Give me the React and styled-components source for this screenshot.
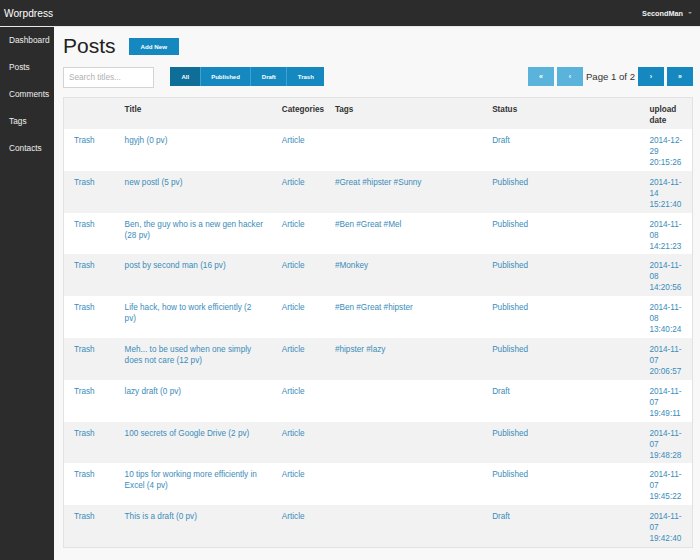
import styled, { createGlobalStyle } from 'styled-components';

const posts = [
    { title: 'hgyjh (0 pv)', category: 'Article', tags: '', status: 'Draft', date: ['2014-12-', '29', '20:15:26'] },
    { title: 'new postl (5 pv)', category: 'Article', tags: '#Great #hipster #Sunny', status: 'Published', date: ['2014-11-', '14', '15:21:40'] },
    { title: 'Ben, the guy who is a new gen hacker (28 pv)', category: 'Article', tags: '#Ben #Great #Mel', status: 'Published', date: ['2014-11-', '08', '14:21:23'] },
    { title: 'post by second man (16 pv)', category: 'Article', tags: '#Monkey', status: 'Published', date: ['2014-11-', '08', '14:20:56'] },
    { title: 'Life hack, how to work efficiently (2 pv)', category: 'Article', tags: '#Ben #Great #hipster', status: 'Published', date: ['2014-11-', '08', '13:40:24'] },
    { title: 'Meh... to be used when one simply does not care (12 pv)', category: 'Article', tags: '#hipster #lazy', status: 'Published', date: ['2014-11-', '07', '20:06:57'] },
    { title: 'lazy draft (0 pv)', category: 'Article', tags: '', status: 'Draft', date: ['2014-11-', '07', '19:49:11'] },
    { title: '100 secrets of Google Drive (2 pv)', category: 'Article', tags: '', status: 'Published', date: ['2014-11-', '07', '19:48:28'] },
    { title: '10 tips for working more efficiently in Excel (4 pv)', category: 'Article', tags: '', status: 'Published', date: ['2014-11-', '07', '19:45:22'] },
    { title: 'This is a draft (0 pv)', category: 'Article', tags: '', status: 'Draft', date: ['2014-11-', '07', '19:42:40'] },
];

const menu = ['Dashboard', 'Posts', 'Comments', 'Tags', 'Contacts'];

export default function App() {
    return (
        <>
            <GlobalStyle />
            <TopBar>
                <Brand>Worpdress</Brand>
                <User>
                    SecondMan
                    <Caret />
                </User>
            </TopBar>
            <Layout>
                <Sidebar>
                    {menu.map((item) => (
                        <MenuItem key={item}>{item}</MenuItem>
                    ))}
                </Sidebar>
                <Main>
                    <PageHeader>
                        <Title>Posts</Title>
                        <AddButton>Add New</AddButton>
                    </PageHeader>
                    <Toolbar>
                        <Search placeholder='Search titles...' />
                        <Filters>
                            <FilterButton $active>All</FilterButton>
                            <FilterButton>Published</FilterButton>
                            <FilterButton>Draft</FilterButton>
                            <FilterButton>Trash</FilterButton>
                        </Filters>
                        <Pager>
                            <PageButton $disabled>«</PageButton>
                            <PageButton $disabled>‹</PageButton>
                            <PageText>Page 1 of 2</PageText>
                            <PageButton>›</PageButton>
                            <PageButton>»</PageButton>
                        </Pager>
                    </Toolbar>
                    <Table>
                        <colgroup>
                            <col style={{ width: 51 }} />
                            <col style={{ width: 157 }} />
                            <col style={{ width: 53 }} />
                            <col style={{ width: 157 }} />
                            <col style={{ width: 157 }} />
                            <col style={{ width: 53 }} />
                        </colgroup>
                        <thead>
                            <HeadRow>
                                <Th></Th>
                                <Th>Title</Th>
                                <Th>Categories</Th>
                                <Th>Tags</Th>
                                <Th>Status</Th>
                                <Th>upload date</Th>
                            </HeadRow>
                        </thead>
                        <tbody>
                            {posts.map((post, i) => (
                                <Row key={i} $striped={i % 2 === 1}>
                                    <Td>Trash</Td>
                                    <Td>{post.title}</Td>
                                    <Td>{post.category}</Td>
                                    <Td>{post.tags}</Td>
                                    <Td>{post.status}</Td>
                                    <Td>
                                        {post.date.map((line, j) => (
                                            <DateLine key={j}>{line}</DateLine>
                                        ))}
                                    </Td>
                                </Row>
                            ))}
                        </tbody>
                    </Table>
                </Main>
            </Layout>
        </>
    );
};

const GlobalStyle = createGlobalStyle`
    body {
        margin: 0;
        font-family: "Liberation Sans", Arial, sans-serif;
        background: #f8f8f8;
    }
`;

const TopBar = styled.div`
    height: 26px;
    background: #2c2c2c;
    display: flex;
    align-items: center;
    justify-content: space-between;
    padding: 0 8px 0 4px;
    border-bottom: 1px solid #e8e8e8;
`;

const Brand = styled.div`
    color: #fff;
    font-size: 10.2px;
`;

const User = styled.div`
    color: #f2f2f2;
    font-size: 7.3px;
    font-weight: bold;
    display: flex;
    align-items: center;
    gap: 5px;
`;

const Caret = styled.span`
    width: 0;
    height: 0;
    border-left: 2.5px solid transparent;
    border-right: 2.5px solid transparent;
    border-top: 2.5px solid #999;
`;

const Layout = styled.div`
    display: flex;
    min-height: 533px;
`;

const Sidebar = styled.div`
    width: 54px;
    background: #2c2c2c;
    flex-shrink: 0;
    padding-top: 0;
`;

const MenuItem = styled.div`
    height: 26.8px;
    display: flex;
    align-items: center;
    padding-left: 9px;
    color: #eee;
    font-size: 8.3px;
`;

const Main = styled.div`
    flex: 1;
    padding: 6px 7px 0 9px;
`;

const PageHeader = styled.div`
    display: flex;
    align-items: center;
    gap: 13px;
`;

const Title = styled.h1`
    margin: 0;
    font-size: 21px;
    line-height: 26px;
    font-weight: normal;
    color: #222;
`;

const AddButton = styled.button`
    height: 17px;
    padding: 0 12px;
    border: none;
    background: #1589bf;
    color: #fff;
    font-family: inherit;
    font-size: 6.2px;
    font-weight: bold;
`;

const Toolbar = styled.div`
    display: flex;
    align-items: flex-start;
    margin-top: 8px;
`;

const Search = styled.input`
    box-sizing: border-box;
    width: 91px;
    height: 21px;
    border: 1px solid #d4d4d4;
    background: #fff;
    padding: 0 5px;
    font-family: inherit;
    font-size: 8.2px;
    outline: none;
    &::placeholder {
        color: #b0b0b0;
    }
`;

const Filters = styled.div`
    display: flex;
    margin-left: 16px;
`;

const FilterButton = styled.button`
    height: 19px;
    padding: 0 10.5px;
    border: none;
    border-left: 1px solid ${(props) => props.$active ? '#0e6e98' : '#3da2cf'};
    background: ${(props) => props.$active ? '#0e6e98' : '#1589bf'};
    color: #fff;
    font-family: inherit;
    font-size: 6px;
    font-weight: bold;
`;

const Pager = styled.div`
    display: flex;
    align-items: center;
    gap: 3px;
    margin-left: auto;
`;

const PageButton = styled.button`
    width: 26px;
    height: 19px;
    border: none;
    padding: 0;
    background: ${(props) => props.$disabled ? '#5ab3da' : '#1589bf'};
    color: #fff;
    font-family: inherit;
    font-size: 7px;
    font-weight: bold;
`;

const PageText = styled.span`
    font-size: 9.6px;
    color: #333;
    line-height: 19px;
`;

const Table = styled.table`
    width: 100%;
    margin-top: 9px;
    table-layout: fixed;
    border-collapse: collapse;
    border: 1px solid #e2e2e2;
    background: #fff;
`;

const HeadRow = styled.tr`
    background: #f2f2f2;
`;

const Th = styled.th`
    text-align: left;
    vertical-align: top;
    padding: 6px 8px 3px 10px;
    font-size: 8.2px;
    line-height: 11px;
    font-weight: bold;
    color: #333;
    height: 22px;
`;

const Row = styled.tr`
    background: ${(props) => props.$striped ? '#f2f2f2' : '#fff'};
`;

const Td = styled.td`
    vertical-align: top;
    padding: 6px 8.5px 2.8px 10px;
    font-size: 8.2px;
    line-height: 11px;
    color: #3a8cba;
    height: 33px;
`;

const DateLine = styled.div``;
